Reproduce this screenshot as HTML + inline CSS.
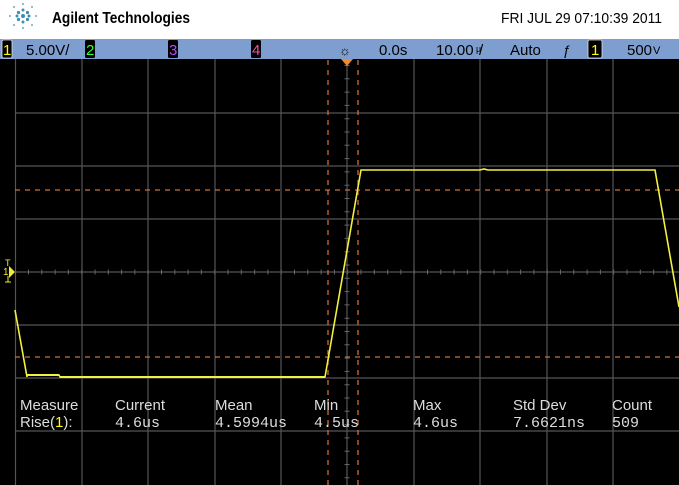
<!DOCTYPE html>
<html><head><style>
body{margin:0;width:679px;height:485px;overflow:hidden;background:#000;font-family:"Liberation Sans",sans-serif}
</style></head><body>
<svg width="679" height="485" xmlns="http://www.w3.org/2000/svg" style="display:block">
<rect width="679" height="485" fill="#000"/>
<rect width="679" height="39" fill="#fff"/>
<g fill="#3a8fb5">
<circle cx="23" cy="16" r="2"/><circle cx="18.5" cy="12.5" r="1.6"/><circle cx="27.5" cy="12.5" r="1.6"/><circle cx="18.5" cy="19.5" r="1.6"/><circle cx="27.5" cy="19.5" r="1.6"/>
<circle cx="23" cy="10" r="1.5"/><circle cx="23" cy="22" r="1.5"/><circle cx="17" cy="16" r="1.5"/><circle cx="29" cy="16" r="1.5"/>
<circle cx="23" cy="4" r="0.9"/><circle cx="23" cy="28" r="0.9"/><circle cx="10" cy="16" r="0.9"/><circle cx="36" cy="16" r="0.9"/>
<circle cx="14" cy="7" r="0.9"/><circle cx="32" cy="7" r="0.9"/><circle cx="14" cy="25" r="0.9"/><circle cx="32" cy="25" r="0.9"/>
</g>
<text x="52" y="23" font-size="16" font-weight="bold" fill="#000" textLength="138" lengthAdjust="spacingAndGlyphs">Agilent Technologies</text>
<text x="662" y="23" font-size="15" fill="#000" text-anchor="end" textLength="161" lengthAdjust="spacingAndGlyphs">FRI JUL 29 07:10:39 2011</text>
<rect y="39" width="679" height="20" fill="#7e9ed0"/>
<g font-size="15" fill="#000">
<rect x="2" y="40" width="10" height="18" rx="1.5" fill="#000" stroke="#ddd" stroke-width="0.8"/><text x="3" y="55" font-size="15" fill="#ff0">1</text>
<text x="26" y="55">5.00V/</text>
<rect x="85" y="40" width="10" height="18" rx="1.5" fill="#000"/><text x="86" y="55" fill="#3f3">2</text>
<rect x="168" y="40" width="10" height="18" rx="1.5" fill="#000"/><text x="169" y="55" fill="#b4f">3</text>
<rect x="251" y="40" width="10" height="18" rx="1.5" fill="#000"/><text x="252" y="55" fill="#f4a">4</text>
<text x="339" y="55" font-size="13">☼</text>
<text x="379" y="55">0.0s</text>
<text x="436" y="55">10.00</text><text x="476" y="52" font-size="9">µ</text><text x="479" y="55">/</text>
<text x="510" y="55">Auto</text>
<text x="563" y="55" font-size="14">ƒ</text>
<rect x="588" y="40" width="14" height="18" rx="1.5" fill="#000" stroke="#ddd" stroke-width="0.8"/><text x="591" y="55" fill="#ff0">1</text>
<text x="627" y="55">500</text><text x="653" y="54" font-size="11">V</text>
</g>
<g stroke="#555" stroke-width="1.2">
<line x1="15.5" y1="59" x2="15.5" y2="485"/><line x1="82" y1="59" x2="82" y2="485"/><line x1="148" y1="59" x2="148" y2="485"/><line x1="215" y1="59" x2="215" y2="485"/><line x1="281" y1="59" x2="281" y2="485"/><line x1="347" y1="59" x2="347" y2="485"/><line x1="414" y1="59" x2="414" y2="485"/><line x1="480" y1="59" x2="480" y2="485"/><line x1="547" y1="59" x2="547" y2="485"/><line x1="613" y1="59" x2="613" y2="485"/>
<line x1="15" y1="113" x2="679" y2="113"/><line x1="15" y1="166" x2="679" y2="166"/><line x1="15" y1="219" x2="679" y2="219"/><line x1="15" y1="272" x2="679" y2="272"/><line x1="15" y1="325" x2="679" y2="325"/><line x1="15" y1="378" x2="679" y2="378"/><line x1="15" y1="431" x2="679" y2="431"/>
</g>
<line x1="15" y1="272" x2="679" y2="272" stroke="#666" stroke-width="5" stroke-dasharray="1 12.3" stroke-dashoffset="-13"/>
<line x1="347" y1="59" x2="347" y2="485" stroke="#666" stroke-width="5" stroke-dasharray="1 12.3" stroke-dashoffset="-6"/>
<g stroke="#c8703a" stroke-width="1.3" stroke-dasharray="5 5">
<line x1="328" y1="60" x2="328" y2="485"/><line x1="358" y1="60" x2="358" y2="485"/>
<line x1="15" y1="190" x2="679" y2="190"/><line x1="15" y1="357" x2="679" y2="357"/>
</g>
<polygon points="341,59 353,59 347,66" fill="#f08a30"/>
<text x="5" y="266" font-size="9" fill="#ee3">T</text><text x="3" y="275" font-size="10" fill="#ee3">1</text><polygon points="9,266 15,272 9,278" fill="#ee3"/><line x1="8" y1="276" x2="8" y2="282" stroke="#ee3"/><line x1="5" y1="282" x2="11" y2="282" stroke="#ee3"/>
<polyline points="15,310 27,377 27,375 59,375 60,377 325,377 361,170 480,170 484,169 488,170 655,170 679,307" fill="none" stroke="#f2f040" stroke-width="1.6"/>
<line x1="27" y1="375" x2="59" y2="375" stroke="#f2f040" stroke-width="2"/>
<line x1="60" y1="377" x2="325" y2="377" stroke="#f2f040" stroke-width="2"/>
<g font-size="15" fill="#ddd">
<text x="20" y="410">Measure</text><text x="20" y="427">Rise(<tspan fill="#ff0">1</tspan>):</text>
<text x="115" y="410">Current</text><text x="115" y="427" font-family="Liberation Mono">4.6us</text>
<text x="215" y="410">Mean</text><text x="215" y="427" font-family="Liberation Mono">4.5994us</text>
<text x="314" y="410">Min</text><text x="314" y="427" font-family="Liberation Mono">4.5us</text>
<text x="413" y="410">Max</text><text x="413" y="427" font-family="Liberation Mono">4.6us</text>
<text x="513" y="410">Std Dev</text><text x="513" y="427" font-family="Liberation Mono">7.6621ns</text>
<text x="612" y="410">Count</text><text x="612" y="427" font-family="Liberation Mono">509</text>
</g>
</svg>
</body></html>
